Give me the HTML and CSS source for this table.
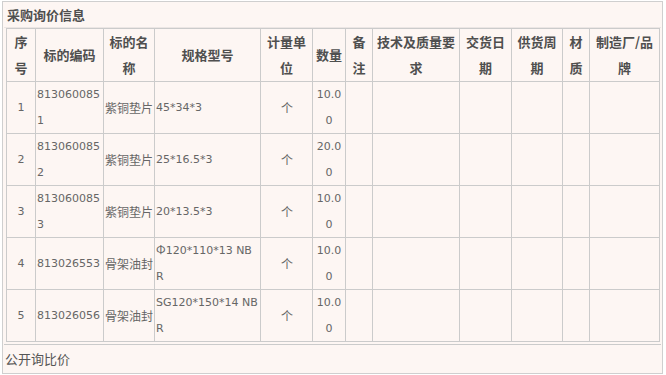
FILE: index.html
```html
<!DOCTYPE html>
<html lang="zh">
<head>
<meta charset="utf-8">
<title>采购询价信息</title>
<link rel="stylesheet" href="styles.css">
</head>
<body>
<div class="panel">
  <div class="title">采购询价信息</div>
  <table class="grid">
    <colgroup>
      <col class="c-idx"><col class="c-code"><col class="c-name"><col class="c-spec">
      <col class="c-unit"><col class="c-qty"><col class="c-note"><col class="c-tech">
      <col class="c-date"><col class="c-period"><col class="c-mat"><col class="c-brand">
    </colgroup>
    <thead>
      <tr>
        <th>序号</th><th>标的编码</th><th>标的名称</th><th>规格型号</th>
        <th>计量单位</th><th>数量</th><th>备注</th><th>技术及质量要求</th>
        <th>交货日期</th><th>供货周期</th><th>材质</th><th>制造厂/品牌</th>
      </tr>
    </thead>
    <tbody>
      <tr>
        <td class="ctr">1</td><td class="num">8130600851</td><td class="cn">紫铜垫片</td><td class="num">45*34*3</td>
        <td class="ctr cn">个</td><td class="ctr num">10.00</td><td></td><td></td><td></td><td></td><td></td><td></td>
      </tr>
      <tr>
        <td class="ctr">2</td><td class="num">8130600852</td><td class="cn">紫铜垫片</td><td class="num">25*16.5*3</td>
        <td class="ctr cn">个</td><td class="ctr num">20.00</td><td></td><td></td><td></td><td></td><td></td><td></td>
      </tr>
      <tr>
        <td class="ctr">3</td><td class="num">8130600853</td><td class="cn">紫铜垫片</td><td class="num">20*13.5*3</td>
        <td class="ctr cn">个</td><td class="ctr num">10.00</td><td></td><td></td><td></td><td></td><td></td><td></td>
      </tr>
      <tr>
        <td class="ctr">4</td><td class="num">813026553</td><td class="cn">骨架油封</td><td class="num"><span class="sym">Φ</span>120*110*13 NBR</td>
        <td class="ctr cn">个</td><td class="ctr num">10.00</td><td></td><td></td><td></td><td></td><td></td><td></td>
      </tr>
      <tr>
        <td class="ctr">5</td><td class="num">813026056</td><td class="cn">骨架油封</td><td class="num">SG120*150*14 NBR</td>
        <td class="ctr cn">个</td><td class="ctr num">10.00</td><td></td><td></td><td></td><td></td><td></td><td></td>
      </tr>
    </tbody>
  </table>
  <div class="footer">公开询比价</div>
</div>
</body>
</html>
```

FILE: styles.css
```css
body {
  margin: 0;
  background: #ffffff;
  font-family: "DejaVu Sans", "Noto Sans CJK SC", sans-serif;
  color: #666;
}

.panel {
  box-sizing: border-box;
  width: 661px;
  margin: 1px 0 0 2px;
  border: 1px solid #cfcfcf;
  padding: 1px;
  background: #fdf6f3;
}

.title {
  height: 24px;
  line-height: 24px;
  padding-left: 3px;
  font-family: "Noto Sans CJK SC", sans-serif;
  font-size: 13px;
  font-weight: bold;
  color: #4f4f4f;
  border-bottom: 1px solid #ece6e4;
}

.grid {
  width: 653px;
  margin: 0 2px 0 2px;
  table-layout: fixed;
  border-collapse: collapse;
  border: 1px solid #cbcbcb;
}

.c-idx { width: 29px; }
.c-code { width: 68px; }
.c-name { width: 51px; }
.c-spec { width: 106px; }
.c-unit { width: 52px; }
.c-qty { width: 33px; }
.c-note { width: 27px; }
.c-tech { width: 87px; }
.c-date { width: 52px; }
.c-period { width: 51px; }
.c-mat { width: 27px; }
.c-brand { width: 70px; }

.grid th,
.grid td {
  border: 1px solid #cbcbcb;
  vertical-align: middle;
  word-break: break-all;
}

.grid th {
  padding: 0 2px;
  line-height: 26px;
  font-family: "Noto Sans CJK SC", sans-serif;
  font-size: 13px;
  font-weight: bold;
  color: #4f4f4f;
  text-align: center;
}

.grid td {
  padding: 0 1px;
  line-height: 25.5px;
  height: 51px;
  font-size: 11px;
  color: #666;
  text-align: left;
}

.grid td.cn {
  font-family: "Noto Sans CJK SC", sans-serif;
  font-size: 12px;
  padding: 0 0 0 1px;
}

.grid td.ctr {
  text-align: center;
}

.sym {
  font-family: "Noto Sans CJK SC", sans-serif;
  font-size: 12px;
  line-height: 0;
}

.footer {
  margin-top: 2px;
  height: 27px;
  line-height: 27px;
  padding-left: 1px;
  border-top: 1px solid #cbcbcb;
  font-family: "Noto Sans CJK SC", sans-serif;
  font-size: 13px;
  color: #555;
}
```
